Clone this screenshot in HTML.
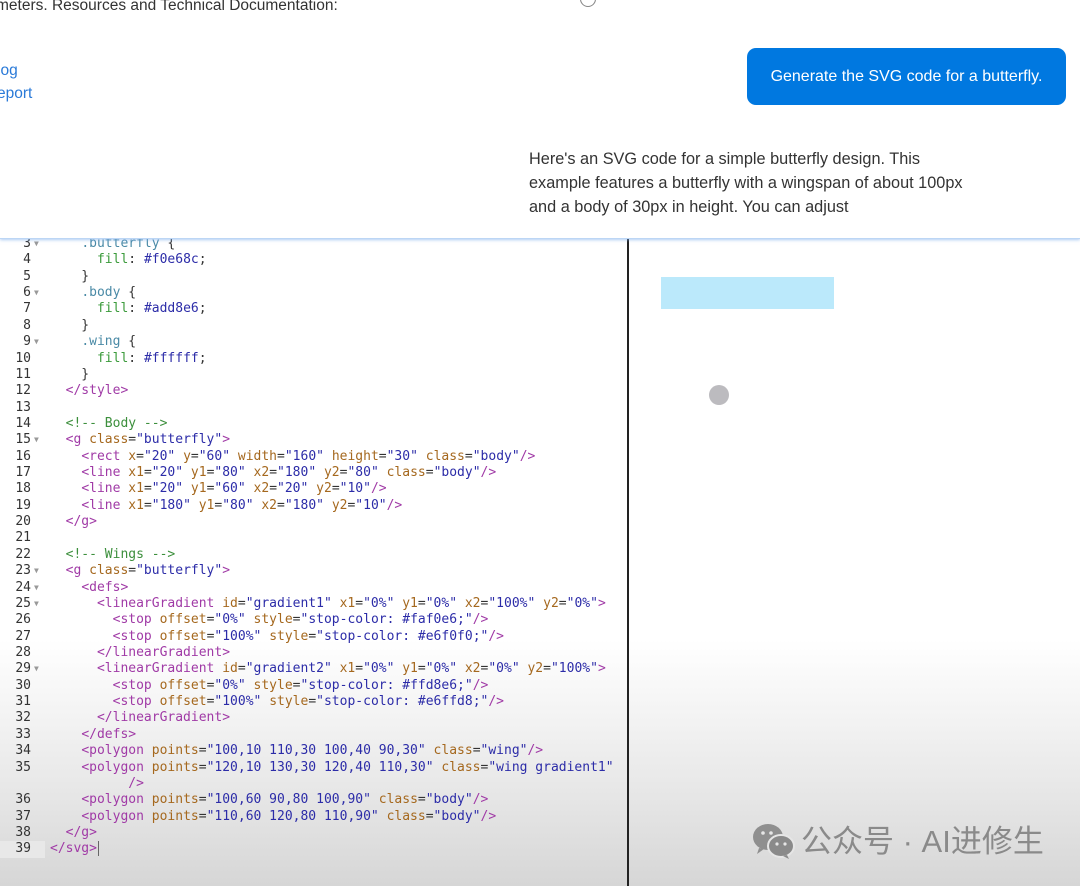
<!DOCTYPE html>
<html><head><meta charset="utf-8"><style>
*{margin:0;padding:0;box-sizing:border-box}
body{width:1080px;height:886px;overflow:hidden;position:relative;font-family:"Liberation Sans",sans-serif;
background:linear-gradient(to bottom,#fff 0,#fff 640px,#e9e9e9 780px,#d6d6d6 886px);}
.code{position:absolute;left:0;top:236px;font-family:"DejaVu Sans Mono","Liberation Mono",monospace;font-size:13px;color:#333;}
.r{height:16.36px;line-height:16.36px;white-space:pre;position:relative}
.n{position:absolute;left:0;width:31px;text-align:right;color:#333}
.f{position:absolute;left:34px;color:#999;font-size:8px}
.x{position:absolute;left:50px}
.t{color:#a03aa6}.a{color:#a5681e}.s{color:#2c2ca8}.c{color:#3c8f3c}.p{color:#3a9a3a}.v{color:#2c2ca8}.sel{color:#4a8aa6}.e{color:#555}
.hl{position:absolute;left:0;top:0;width:45px;height:16.36px;background:#e8e8e8}
.top{position:absolute;left:0;top:0;width:1080px;height:239px;background:#fff;border-bottom:1px solid #bcd6f5;box-shadow:0 1px 3px rgba(120,170,235,.6);z-index:5}
.btn{position:absolute;left:747px;top:48px;width:319px;height:57px;background:#0078e0;border-radius:9px;color:#fff;font-size:16px;line-height:57px;text-align:center}
.resp{position:absolute;left:529px;top:147px;font-size:16.3px;line-height:24px;color:#333}
</style></head><body>
<div class="top">
<div style="position:absolute;left:-4px;top:-3px;font-size:15.5px;color:#333">meters. Resources and Technical Documentation:</div>
<div style="position:absolute;left:580px;top:-9px;width:16px;height:16px;border:1.5px solid #888;border-radius:50%"></div>
<div style="position:absolute;left:-3px;top:59px;font-size:15.5px;color:#2a7ad8;line-height:23px">log<br>eport</div>
<div class="btn">Generate the SVG code for a butterfly.</div>
<div class="resp">Here's an SVG code for a simple butterfly design. This<br>example features a butterfly with a wingspan of about 100px<br>and a body of 30px in height. You can adjust</div>
</div>
<div style="position:absolute;left:627px;top:239px;width:2px;height:647px;background:#222"></div>
<div style="position:absolute;left:661px;top:277px;width:173px;height:32px;background:#bbe9fb"></div>
<div style="position:absolute;left:709px;top:385px;width:20px;height:20px;border-radius:50%;background:#bcbbbf"></div>
<div class="code">
<div class="r"><span class="n">3</span><span class="f">▼</span><span class="x">    <span class="sel">.butterfly</span> {</span></div>
<div class="r"><span class="n">4</span><span class="x">      <span class="p">fill</span>: <span class="v">#f0e68c</span>;</span></div>
<div class="r"><span class="n">5</span><span class="x">    }</span></div>
<div class="r"><span class="n">6</span><span class="f">▼</span><span class="x">    <span class="sel">.body</span> {</span></div>
<div class="r"><span class="n">7</span><span class="x">      <span class="p">fill</span>: <span class="v">#add8e6</span>;</span></div>
<div class="r"><span class="n">8</span><span class="x">    }</span></div>
<div class="r"><span class="n">9</span><span class="f">▼</span><span class="x">    <span class="sel">.wing</span> {</span></div>
<div class="r"><span class="n">10</span><span class="x">      <span class="p">fill</span>: <span class="v">#ffffff</span>;</span></div>
<div class="r"><span class="n">11</span><span class="x">    }</span></div>
<div class="r"><span class="n">12</span><span class="x">  <span class="t">&lt;/style&gt;</span></span></div>
<div class="r"><span class="n">13</span></div>
<div class="r"><span class="n">14</span><span class="x">  <span class="c">&lt;!-- Body --&gt;</span></span></div>
<div class="r"><span class="n">15</span><span class="f">▼</span><span class="x">  <span class="t">&lt;g</span> <span class="a">class</span>=<span class="s">"butterfly"</span><span class="t">&gt;</span></span></div>
<div class="r"><span class="n">16</span><span class="x">    <span class="t">&lt;rect</span> <span class="a">x</span>=<span class="s">"20"</span> <span class="a">y</span>=<span class="s">"60"</span> <span class="a">width</span>=<span class="s">"160"</span> <span class="a">height</span>=<span class="s">"30"</span> <span class="a">class</span>=<span class="s">"body"</span><span class="t">/&gt;</span></span></div>
<div class="r"><span class="n">17</span><span class="x">    <span class="t">&lt;line</span> <span class="a">x1</span>=<span class="s">"20"</span> <span class="a">y1</span>=<span class="s">"80"</span> <span class="a">x2</span>=<span class="s">"180"</span> <span class="a">y2</span>=<span class="s">"80"</span> <span class="a">class</span>=<span class="s">"body"</span><span class="t">/&gt;</span></span></div>
<div class="r"><span class="n">18</span><span class="x">    <span class="t">&lt;line</span> <span class="a">x1</span>=<span class="s">"20"</span> <span class="a">y1</span>=<span class="s">"60"</span> <span class="a">x2</span>=<span class="s">"20"</span> <span class="a">y2</span>=<span class="s">"10"</span><span class="t">/&gt;</span></span></div>
<div class="r"><span class="n">19</span><span class="x">    <span class="t">&lt;line</span> <span class="a">x1</span>=<span class="s">"180"</span> <span class="a">y1</span>=<span class="s">"80"</span> <span class="a">x2</span>=<span class="s">"180"</span> <span class="a">y2</span>=<span class="s">"10"</span><span class="t">/&gt;</span></span></div>
<div class="r"><span class="n">20</span><span class="x">  <span class="t">&lt;/g&gt;</span></span></div>
<div class="r"><span class="n">21</span></div>
<div class="r"><span class="n">22</span><span class="x">  <span class="c">&lt;!-- Wings --&gt;</span></span></div>
<div class="r"><span class="n">23</span><span class="f">▼</span><span class="x">  <span class="t">&lt;g</span> <span class="a">class</span>=<span class="s">"butterfly"</span><span class="t">&gt;</span></span></div>
<div class="r"><span class="n">24</span><span class="f">▼</span><span class="x">    <span class="t">&lt;defs&gt;</span></span></div>
<div class="r"><span class="n">25</span><span class="f">▼</span><span class="x">      <span class="t">&lt;linearGradient</span> <span class="a">id</span>=<span class="s">"gradient1"</span> <span class="a">x1</span>=<span class="s">"0%"</span> <span class="a">y1</span>=<span class="s">"0%"</span> <span class="a">x2</span>=<span class="s">"100%"</span> <span class="a">y2</span>=<span class="s">"0%"</span><span class="t">&gt;</span></span></div>
<div class="r"><span class="n">26</span><span class="x">        <span class="t">&lt;stop</span> <span class="a">offset</span>=<span class="s">"0%"</span> <span class="a">style</span>=<span class="s">"stop-color: #faf0e6;"</span><span class="t">/&gt;</span></span></div>
<div class="r"><span class="n">27</span><span class="x">        <span class="t">&lt;stop</span> <span class="a">offset</span>=<span class="s">"100%"</span> <span class="a">style</span>=<span class="s">"stop-color: #e6f0f0;"</span><span class="t">/&gt;</span></span></div>
<div class="r"><span class="n">28</span><span class="x">      <span class="t">&lt;/linearGradient&gt;</span></span></div>
<div class="r"><span class="n">29</span><span class="f">▼</span><span class="x">      <span class="t">&lt;linearGradient</span> <span class="a">id</span>=<span class="s">"gradient2"</span> <span class="a">x1</span>=<span class="s">"0%"</span> <span class="a">y1</span>=<span class="s">"0%"</span> <span class="a">x2</span>=<span class="s">"0%"</span> <span class="a">y2</span>=<span class="s">"100%"</span><span class="t">&gt;</span></span></div>
<div class="r"><span class="n">30</span><span class="x">        <span class="t">&lt;stop</span> <span class="a">offset</span>=<span class="s">"0%"</span> <span class="a">style</span>=<span class="s">"stop-color: #ffd8e6;"</span><span class="t">/&gt;</span></span></div>
<div class="r"><span class="n">31</span><span class="x">        <span class="t">&lt;stop</span> <span class="a">offset</span>=<span class="s">"100%"</span> <span class="a">style</span>=<span class="s">"stop-color: #e6ffd8;"</span><span class="t">/&gt;</span></span></div>
<div class="r"><span class="n">32</span><span class="x">      <span class="t">&lt;/linearGradient&gt;</span></span></div>
<div class="r"><span class="n">33</span><span class="x">    <span class="t">&lt;/defs&gt;</span></span></div>
<div class="r"><span class="n">34</span><span class="x">    <span class="t">&lt;polygon</span> <span class="a">points</span>=<span class="s">"100,10 110,30 100,40 90,30"</span> <span class="a">class</span>=<span class="s">"wing"</span><span class="t">/&gt;</span></span></div>
<div class="r"><span class="n">35</span><span class="x">    <span class="t">&lt;polygon</span> <span class="a">points</span>=<span class="s">"120,10 130,30 120,40 110,30"</span> <span class="a">class</span>=<span class="s">"wing gradient1"</span></span></div>
<div class="r"><span class="x">          <span class="t">/&gt;</span></span></div>
<div class="r"><span class="n">36</span><span class="x">    <span class="t">&lt;polygon</span> <span class="a">points</span>=<span class="s">"100,60 90,80 100,90"</span> <span class="a">class</span>=<span class="s">"body"</span><span class="t">/&gt;</span></span></div>
<div class="r"><span class="n">37</span><span class="x">    <span class="t">&lt;polygon</span> <span class="a">points</span>=<span class="s">"110,60 120,80 110,90"</span> <span class="a">class</span>=<span class="s">"body"</span><span class="t">/&gt;</span></span></div>
<div class="r"><span class="n">38</span><span class="x">  <span class="t">&lt;/g&gt;</span></span></div>
<div class="r"><span class="hl"></span><span class="n">39</span><span class="x"><span class="t">&lt;/svg&gt;</span><span style="border-left:1px solid #666;margin-left:1px"></span></span></div>
</div>
<div style="position:absolute;left:751px;top:822px;width:45px;height:38px">
<svg width="45" height="38" viewBox="0 0 45 38"><ellipse cx="17" cy="15" rx="15" ry="13" fill="#8f8f8f"/><path d="M8 26 L6 32 L13 27Z" fill="#8f8f8f"/><ellipse cx="30" cy="24" rx="13" ry="11" fill="#8a8a8a" stroke="#e6e6e6" stroke-width="2"/><path d="M36 33 L38 37 L32 34Z" fill="#8a8a8a"/><circle cx="12" cy="11" r="1.8" fill="#e6e6e6"/><circle cx="20" cy="11" r="1.8" fill="#e6e6e6"/><circle cx="26" cy="22" r="1.6" fill="#e6e6e6"/><circle cx="34" cy="22" r="1.6" fill="#e6e6e6"/></svg></div>
<div style="position:absolute;left:801px;top:822px;font-family:'Liberation Sans','Noto Sans CJK SC',sans-serif;font-size:31px;color:#8a8a8a;line-height:40px;white-space:nowrap">公众号 · AI进修生</div>
</body></html>
